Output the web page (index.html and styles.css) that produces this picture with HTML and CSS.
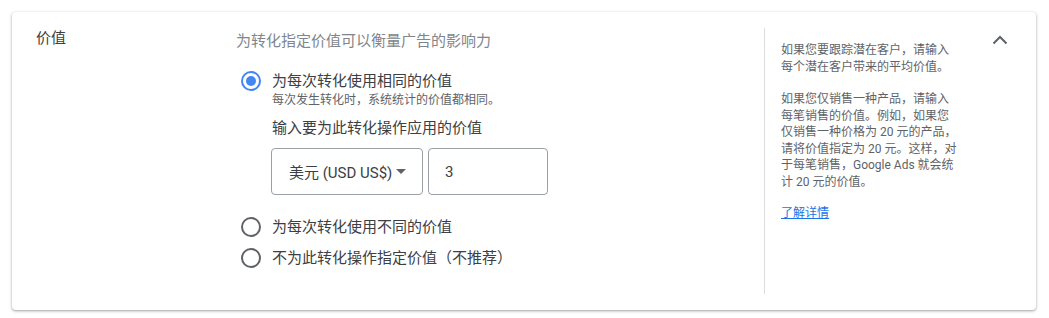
FILE: index.html
```html
<!DOCTYPE html>
<html lang="zh-CN">
<head>
<meta charset="utf-8">
<title>价值</title>
<link rel="stylesheet" href="styles.css">
</head>
<body>
<div class="card">
  <div class="label-col">价值</div>
  <div class="main">
    <div class="desc">为转化指定价值可以衡量广告的影响力</div>
    <div class="option first">
      <span class="radio checked"></span>
      <div class="opt-body">
        <div class="opt-label">为每次转化使用相同的价值</div>
        <div class="opt-sub">每次发生转化时，系统统计的价值都相同。</div>
        <div class="value-label">输入要为此转化操作应用的价值</div>
        <div class="fields">
          <div class="select">
            <span>美元 (USD US$)</span>
            <svg class="caret" width="10" height="5" viewBox="0 0 10 5"><path d="M0 0l5 5 5-5z" fill="#5f6368"/></svg>
          </div>
          <div class="input">3</div>
        </div>
      </div>
    </div>
    <div class="option second">
      <span class="radio"></span>
      <div class="opt-label">为每次转化使用不同的价值</div>
    </div>
    <div class="option third">
      <span class="radio"></span>
      <div class="opt-label">不为此转化操作指定价值（不推荐）</div>
    </div>
  </div>
  <div class="side">
    <p class="help">如果您要跟踪潜在客户，请输入每个潜在客户带来的平均价值。</p>
    <p class="help">如果您仅销售一种产品，请输入每笔销售的价值。例如，如果您仅销售一种价格为 20 元的产品，请将价值指定为 20 元。这样，对于每笔销售，Google Ads 就会统计 20 元的价值。</p>
    <a class="more" href="#">了解详情</a>
  </div>
  <div class="toggle">
    <svg width="24" height="24" viewBox="0 0 24 24"><path d="M5.5 15.5L12 9l6.5 6.5" fill="none" stroke="#5f6368" stroke-width="2"/></svg>
  </div>
</div>
</body>
</html>
```

FILE: styles.css
```css
* { box-sizing: border-box; }
html, body { margin: 0; padding: 0; background: #fff; }
body {
  padding: 12px;
  width: 1049px;
  font-family: Roboto, "Noto Sans CJK SC", sans-serif;
  color: #3c4043;
}
.card {
  display: flex;
  width: 1024px;
  height: 298px;
  padding: 16px 24px;
  background: #fff;
  border-radius: 4px;
  box-shadow: 0 1px 2px rgba(60,64,67,.3), 0 1px 3px 1px rgba(60,64,67,.15);
}
.label-col {
  width: 200px;
  flex: none;
  font-size: 15px;
  line-height: 20px;
  color: #3c4043;
}
.main {
  flex: 1;
  padding-top: 3px;
}
.desc {
  font-size: 15px;
  line-height: 20px;
  color: #80868b;
}
.option {
  display: flex;
  align-items: flex-start;
  gap: 11px;
  padding-left: 5px;
}
.option.first { margin-top: 20px; }
.option.second { margin-top: 22px; }
.option.third { margin-top: 11px; }
.radio {
  flex: none;
  width: 20px;
  height: 20px;
  border: 2px solid #5f6368;
  border-radius: 50%;
  position: relative;
}
.radio.checked { border-color: #4285f4; }
.radio.checked::after {
  content: "";
  position: absolute;
  left: 3px;
  top: 3px;
  width: 10px;
  height: 10px;
  border-radius: 50%;
  background: #4285f4;
}
.opt-label {
  font-size: 15px;
  line-height: 20px;
  color: #3c4043;
}
.opt-sub {
  font-size: 12px;
  line-height: 18px;
  color: #5f6368;
}
.value-label {
  margin-top: 9px;
  font-size: 15px;
  line-height: 20px;
  color: #3c4043;
}
.fields {
  display: flex;
  gap: 5px;
  margin-top: 10px;
  margin-left: -1px;
}
.select, .input {
  height: 47px;
  border: 1px solid #9aa0a6;
  border-radius: 4px;
  display: flex;
  align-items: center;
  font-size: 15px;
  color: #3c4043;
}
.select {
  width: 152px;
  padding: 0 16px 0 17px;
  justify-content: space-between;
}
.input {
  width: 120px;
  padding-left: 16px;
}
.side {
  flex: none;
  width: 224px;
  border-left: 1px solid #dadce0;
  padding: 14px 0 0 16px;
}
.help {
  width: 178px;
  margin: 0 0 16px;
  font-size: 12px;
  line-height: 16.5px;
  color: #5f6368;
}
.help + .help { margin-bottom: 12px; }
.more {
  display: inline-block;
  font-size: 12px;
  line-height: 16.5px;
  color: #1a73e8;
  text-decoration: underline;
}
.toggle {
  flex: none;
  width: 24px;
  height: 24px;
}
.toggle svg { display: block; }
```
